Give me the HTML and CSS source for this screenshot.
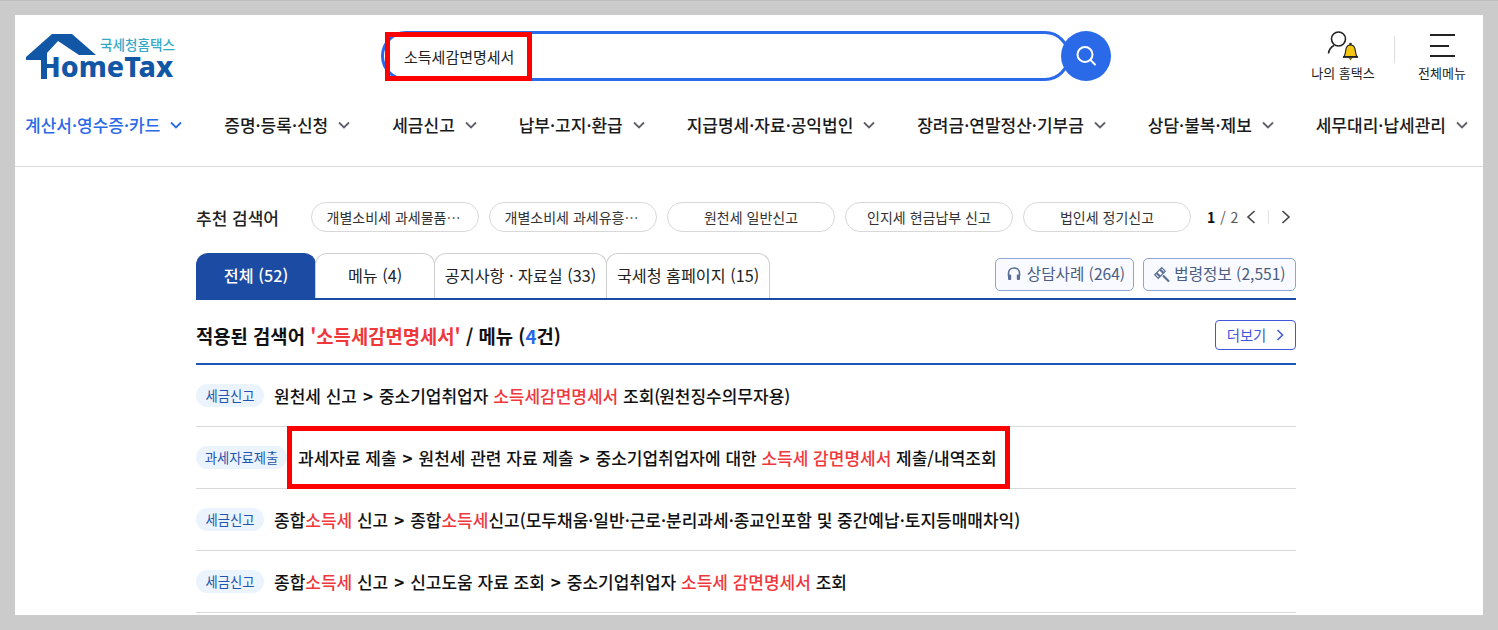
FILE: index.html
```html
<!DOCTYPE html>
<html lang="ko">
<head>
<meta charset="utf-8">
<title>국세청 홈택스</title>
<link rel="stylesheet" href="styles.css">
</head>
<body>
<div class="frame">
  <header class="header">
    <div class="top">
      <a class="logo">
        <svg class="logo-roof" width="72" height="46" viewBox="0 0 72 46"><path fill="#1257a6" d="M1 23 L27 0 H47 L71 21 H54 L33 7 L22 19 V45 H16 V26 H1Z"/></svg>
        <span class="logo-sub">국세청홈택스</span>
        <span class="logo-main">HomeTax</span>
      </a>
      <div class="search">
        <div class="search-box"><span class="search-text">소득세감면명세서</span></div>
        <button class="search-btn"><svg width="24" height="24" viewBox="0 0 24 24" fill="none" stroke="#fff" stroke-width="2"><circle cx="11" cy="10.500" r="7.500"/><path d="M16.500 16 L21 20.500" stroke-linecap="round"/></svg></button>
      </div>
      <div class="util">
        <div class="util-item util-my">
          <svg width="34" height="31" viewBox="0 0 34 31"><circle cx="11.500" cy="9" r="7" fill="none" stroke="#222" stroke-width="1.600"/><path d="M1.500 23.500 C2 19.500 4 17 7 15.500" fill="none" stroke="#222" stroke-width="1.600"/><path fill="#f5c60f" stroke="#222" stroke-width="1.100" d="M17 26.500 C18.500 24.500 18.500 21 19 19 C19.500 16.500 21.500 15 23.500 15 C25.500 15 27.500 16.500 28 19 C28.500 21 28.500 24.500 30 26.500Z"/><path stroke="#222" stroke-width="1.800" d="M16 27 H31"/><path fill="#8a6d10" d="M21.500 28 H25.500 L23.500 30.500Z"/><circle cx="23.500" cy="14" r="1.300" fill="#222"/></svg>
          <span>나의 홈택스</span>
        </div>
        <div class="util-sep"></div>
        <div class="util-item util-all">
          <div class="burger"><i class="b1"></i><i class="b2"></i><i class="b3"></i></div>
          <span>전체메뉴</span>
        </div>
      </div>
    </div>
    <nav class="nav">
      <a class="nav-item on">계산서·영수증·카드<svg class="chev" viewBox="0 0 12 8"><path d="M1 1.500 L6 6.500 L11 1.500"/></svg></a>
      <a class="nav-item">증명·등록·신청<svg class="chev" viewBox="0 0 12 8"><path d="M1 1.500 L6 6.500 L11 1.500"/></svg></a>
      <a class="nav-item">세금신고<svg class="chev" viewBox="0 0 12 8"><path d="M1 1.500 L6 6.500 L11 1.500"/></svg></a>
      <a class="nav-item">납부·고지·환급<svg class="chev" viewBox="0 0 12 8"><path d="M1 1.500 L6 6.500 L11 1.500"/></svg></a>
      <a class="nav-item">지급명세·자료·공익법인<svg class="chev" viewBox="0 0 12 8"><path d="M1 1.500 L6 6.500 L11 1.500"/></svg></a>
      <a class="nav-item">장려금·연말정산·기부금<svg class="chev" viewBox="0 0 12 8"><path d="M1 1.500 L6 6.500 L11 1.500"/></svg></a>
      <a class="nav-item">상담·불복·제보<svg class="chev" viewBox="0 0 12 8"><path d="M1 1.500 L6 6.500 L11 1.500"/></svg></a>
      <a class="nav-item">세무대리·납세관리<svg class="chev" viewBox="0 0 12 8"><path d="M1 1.500 L6 6.500 L11 1.500"/></svg></a>
    </nav>
  </header>
  <main class="content">
    <section class="rec">
      <strong class="rec-title">추천 검색어</strong>
      <div class="pills">
        <a class="pill pill-cut">개별소비세 과세물품…</a>
        <a class="pill pill-cut">개별소비세 과세유흥…</a>
        <a class="pill">원천세 일반신고</a>
        <a class="pill">인지세 현금납부 신고</a>
        <a class="pill">법인세 정기신고</a>
      </div>
      <div class="pager">
        <span class="pager-num"><b>1</b> / 2</span>
        <svg class="pager-arrow pager-prev" viewBox="0 0 10 14"><path d="M8.500 1 L2 7 L8.500 13"/></svg>
        <i class="pager-sep"></i>
        <svg class="pager-arrow" viewBox="0 0 10 14"><path d="M1.500 1 L8 7 L1.500 13"/></svg>
      </div>
    </section>
    <section class="tabs">
      <a class="tab tab-on tab-1">전체 (52)</a>
      <a class="tab tab-2">메뉴 (4)</a>
      <a class="tab tab-3">공지사항 · 자료실 (33)</a>
      <a class="tab tab-4">국세청 홈페이지 (15)</a>
      <div class="tab-btns">
        <a class="tab-btn tab-btn-a"><svg width="16" height="16" viewBox="0 0 16 16" fill="none"><path d="M2.500 10 V7.500 C2.500 4 5 2 8 2 C11 2 13.500 4 13.500 7.500 V10" stroke="#5a6f94" stroke-width="1.600"/><rect x="2" y="8.500" width="3.200" height="5.500" rx="1" fill="#5a6f94"/><rect x="10.800" y="8.500" width="3.200" height="5.500" rx="1" fill="#5a6f94"/></svg>상담사례 (264)</a>
        <a class="tab-btn tab-btn-b"><svg width="18" height="17" viewBox="0 0 18 17" fill="none" stroke="#5a6f94" stroke-width="1.200"><g transform="rotate(-45 7 7)"><rect x="2" y="4.500" width="10" height="5" fill="#fff"/><path d="M4.500 4.500 V9.500 M9.500 4.500 V9.500" stroke-width="2.200"/></g><path d="M10 9.500 L16 15.500" stroke-width="2.200"/></svg>법령정보 (2,551)</a>
      </div>
    </section>
    <section class="result-head">
      <h2 class="result-title">적용된 검색어 <em class="red">'소득세감면명세서'</em> / 메뉴 (<em class="blue">4</em>건)</h2>
      <a class="more">더보기<svg class="more-arrow" viewBox="0 0 8 12"><path d="M1.500 1 L6.500 6 L1.500 11"/></svg></a>
    </section>
    <ul class="list">
      <li class="row"><span class="badge">세금신고</span><a class="row-text">원천세 신고 <span class="gt">&gt;</span> 중소기업취업자 <em class="red">소득세감면명세서</em> 조회<span class="par">(</span>원천징수의무자용<span class="par">)</span></a></li>
      <li class="row"><span class="badge badge-wide">과세자료제출</span><a class="row-text">과세자료 제출 <span class="gt">&gt;</span> 원천세 관련 자료 제출 <span class="gt">&gt;</span> 중소기업취업자에 대한 <em class="red">소득세 감면명세서</em> 제출/내역조회</a></li>
      <li class="row"><span class="badge">세금신고</span><a class="row-text">종합<em class="red">소득세</em> 신고 <span class="gt">&gt;</span> 종합<em class="red">소득세</em>신고(모두채움·일반·근로·분리과세·종교인포함 및 중간예납·토지등매매차익)</a></li>
      <li class="row"><span class="badge">세금신고</span><a class="row-text">종합<em class="red">소득세</em> 신고 <span class="gt">&gt;</span> 신고도움 자료 조회 <span class="gt">&gt;</span> 중소기업취업자 <em class="red">소득세 감면명세서</em> 조회</a></li>
    </ul>
  </main>
  <div class="mark mark-search"></div>
  <div class="mark mark-row"></div>
</div>
</body>
</html>
```

FILE: styles.css
```css
* { box-sizing: border-box; }
html, body { margin: 0; padding: 0; height: 630px; overflow: hidden; }
body {
  background: #cbcbcb;
  border-top: 1px solid #bdbdbd;
  padding: 14px 15px 15px;
  font-family: "Noto Sans CJK KR", "Noto Sans", sans-serif;
  color: #111;
}
a { color: inherit; text-decoration: none; }
em { font-style: normal; }
.red { color: #f0383c; }
.blue { color: #2a6ae8; }

.frame {
  position: relative;
  width: 1468px;
  height: 600px;
  background: #fff;
  overflow: hidden;
}

/* header */
.header {
  height: 152px;
  border-bottom: 1px solid #dcdcdc;
}
.top {
  display: flex;
  align-items: flex-start;
  height: 83px;
  padding-left: 10px;
}
.logo {
  position: relative;
  display: block;
  width: 150px;
  height: 66px;
  flex: none;
}
.logo-roof { position: absolute; left: 0; top: 19px; }
.logo-sub {
  position: absolute;
  left: 75px;
  top: 21px;
  font-size: 13.600px;
  line-height: 16px;
  font-weight: 500;
  color: #35a9c6;
  white-space: nowrap;
}
.logo-main {
  position: absolute;
  left: 14px;
  top: 39px;
  font-family: "Noto Sans", sans-serif;
  font-size: 28.500px;
  line-height: 24px;
  font-weight: 800;
  color: #1257a6;
}
.search {
  display: flex;
  margin: 16px 0 0 206px;
  width: 730px;
  flex: none;
}
.search-box {
  width: 689px;
  height: 50px;
  border: 3px solid #2a6ae8;
  border-radius: 25px;
  padding-left: 20px;
  display: flex;
  align-items: center;
  flex: none;
}
.search-text { font-size: 15px; color: #222; }
.search-btn {
  width: 50px;
  height: 50px;
  border: 0;
  padding: 0;
  border-radius: 50%;
  background: #2a6ae8;
  margin-left: -9px;
  display: flex;
  align-items: center;
  justify-content: center;
  flex: none;
  position: relative;
}
.util {
  display: flex;
  align-items: flex-start;
  margin: 15px 0 0 199px;
}
.util-item {
  display: flex;
  flex-direction: column;
  align-items: center;
  font-size: 13px;
  line-height: 18px;
  color: #222;
  white-space: nowrap;
}
.util-my { width: 66px; }
.util-my svg { margin-bottom: 3px; margin-left: 2px; }
.util-sep { width: 1px; height: 27px; background: #dcdcdc; margin: 6px 20px 0 18px; }
.util-all { width: 54px; }
.burger { height: 34px; width: 25px; display: flex; flex-direction: column; align-items: flex-start; }
.burger i { display: block; height: 2px; background: #222; flex: none; }
.b1 { width: 25px; margin-top: 4px; }
.b2 { width: 19px; margin-top: 9px; }
.b3 { width: 25px; margin-top: 8px; }

.nav {
  display: flex;
  justify-content: space-between;
  padding: 15px 15px 0 10px;
}
.nav-item {
  display: flex;
  align-items: center;
  font-size: 17px;
  line-height: 24px;
  font-weight: 500;
  color: #1b1b1b;
  white-space: nowrap;
}
.nav-item.on { color: #2a6ae8; }
.chev {
  width: 12px;
  height: 8px;
  margin-left: 10px;
  fill: none;
  stroke: #5f5f68;
  stroke-width: 1.800;
}
.on .chev { stroke: #2a6ae8; }

/* content */
.content {
  width: 1100px;
  margin-left: 181px;
}
.rec {
  display: flex;
  align-items: center;
  height: 30px;
  margin-top: 35px;
}
.rec-title {
  width: 115px;
  flex: none;
  font-size: 17px;
  font-weight: 500;
  color: #222;
}
.pills { display: flex; gap: 10px; flex: none; }
.pill {
  width: 168px;
  height: 30px;
  border: 1px solid #d8d8d8;
  border-radius: 15px;
  display: flex;
  align-items: center;
  justify-content: center;
  font-size: 14px;
  color: #333;
  white-space: nowrap;
}
.pill-cut { padding-right: 3px; }
.pager {
  display: flex;
  align-items: center;
  margin-left: 16px;
  font-size: 14px;
  color: #555;
}
.pager-num { word-spacing: 1px; }
.pager-num b { color: #111; }
.pager-arrow { width: 10px; height: 14px; flex: none; fill: none; stroke: #444; stroke-width: 1.600; }
.pager-prev { margin-left: 8px; }
.pager-sep { display: block; width: 1px; height: 14px; background: #e2e2e2; margin: 0 12px 0 12px; }

.tabs {
  display: flex;
  align-items: stretch;
  height: 47px;
  margin-top: 21px;
  border-bottom: 2px solid #1c4ba3;
}
.tab {
  display: flex;
  align-items: center;
  justify-content: center;
  border: 1px solid #cfcfcf;
  border-bottom: 0;
  border-radius: 12px 12px 0 0;
  font-size: 16.200px;
  color: #222;
  white-space: nowrap;
  margin-left: -1px;
  padding-bottom: 2px;
}
.tab-on {
  background: #1c4ba3;
  border-color: #1c4ba3;
  color: #fff;
  font-weight: 500;
  margin-left: 0;
}
.tab-1 { width: 120px; }
.tab-2 { width: 120px; }
.tab-3 { width: 173px; }
.tab-4 { width: 164px; }
.tab-btns {
  margin-left: auto;
  display: flex;
  gap: 9px;
  padding-top: 5px;
  height: 38px;
}
.tab-btn {
  height: 33px;
  border: 1px solid #8ba6d4;
  border-radius: 5px;
  background: #f8faff;
  display: flex;
  align-items: center;
  justify-content: center;
  gap: 3px;
  font-size: 15.600px;
  color: #4a5d80;
  white-space: nowrap;
  padding-bottom: 3px;
}
.tab-btn svg { margin-top: 2px; }
.tab-btn-a { width: 139px; gap: 5px; padding-left: 2px; }
.tab-btn-b { width: 153px; }

.result-head {
  display: flex;
  align-items: center;
  justify-content: space-between;
  height: 65px;
  padding-top: 10px;
  border-bottom: 2px solid #1c55bc;
}
.result-title {
  margin: -1px 0 0;
  font-size: 18.800px;
  line-height: 28px;
  font-weight: 700;
  color: #111;
}
.more {
  width: 81px;
  height: 30px;
  border: 1px solid #3f57d8;
  border-radius: 4px;
  display: flex;
  align-items: center;
  justify-content: center;
  gap: 10px;
  font-size: 14.400px;
  color: #3f57d8;
  margin-top: -3px;
  padding-bottom: 1px;
}
.more-arrow { width: 8px; height: 12px; fill: none; stroke: #3f57d8; stroke-width: 1.500; }

.list { list-style: none; margin: 0; padding: 0; }
.row {
  display: flex;
  align-items: center;
  gap: 10px;
  height: 62px;
  border-bottom: 1px solid #d9d9d9;
  padding-bottom: 1px;
}
.badge {
  width: 68px;
  height: 23px;
  flex: none;
  border-radius: 12px;
  background: #ebf4fd;
  color: #1f55b0;
  font-size: 13.300px;
  display: flex;
  align-items: center;
  justify-content: center;
  white-space: nowrap;
}
.badge-wide { width: 91px; margin-right: 1px; }
.row-text {
  font-size: 17px;
  font-weight: 500;
  color: #111;
  white-space: nowrap;
}
.gt { padding: 0 1.200px; font-weight: 700; }
.par { letter-spacing: -1.200px; }

/* red annotation boxes */
.mark {
  position: absolute;
  border: 5px solid #ff0000;
  pointer-events: none;
}
.mark-search { left: 370px; top: 17px; width: 147px; height: 49px; }
.mark-row { left: 272px; top: 411px; width: 723px; height: 63px; }
```
